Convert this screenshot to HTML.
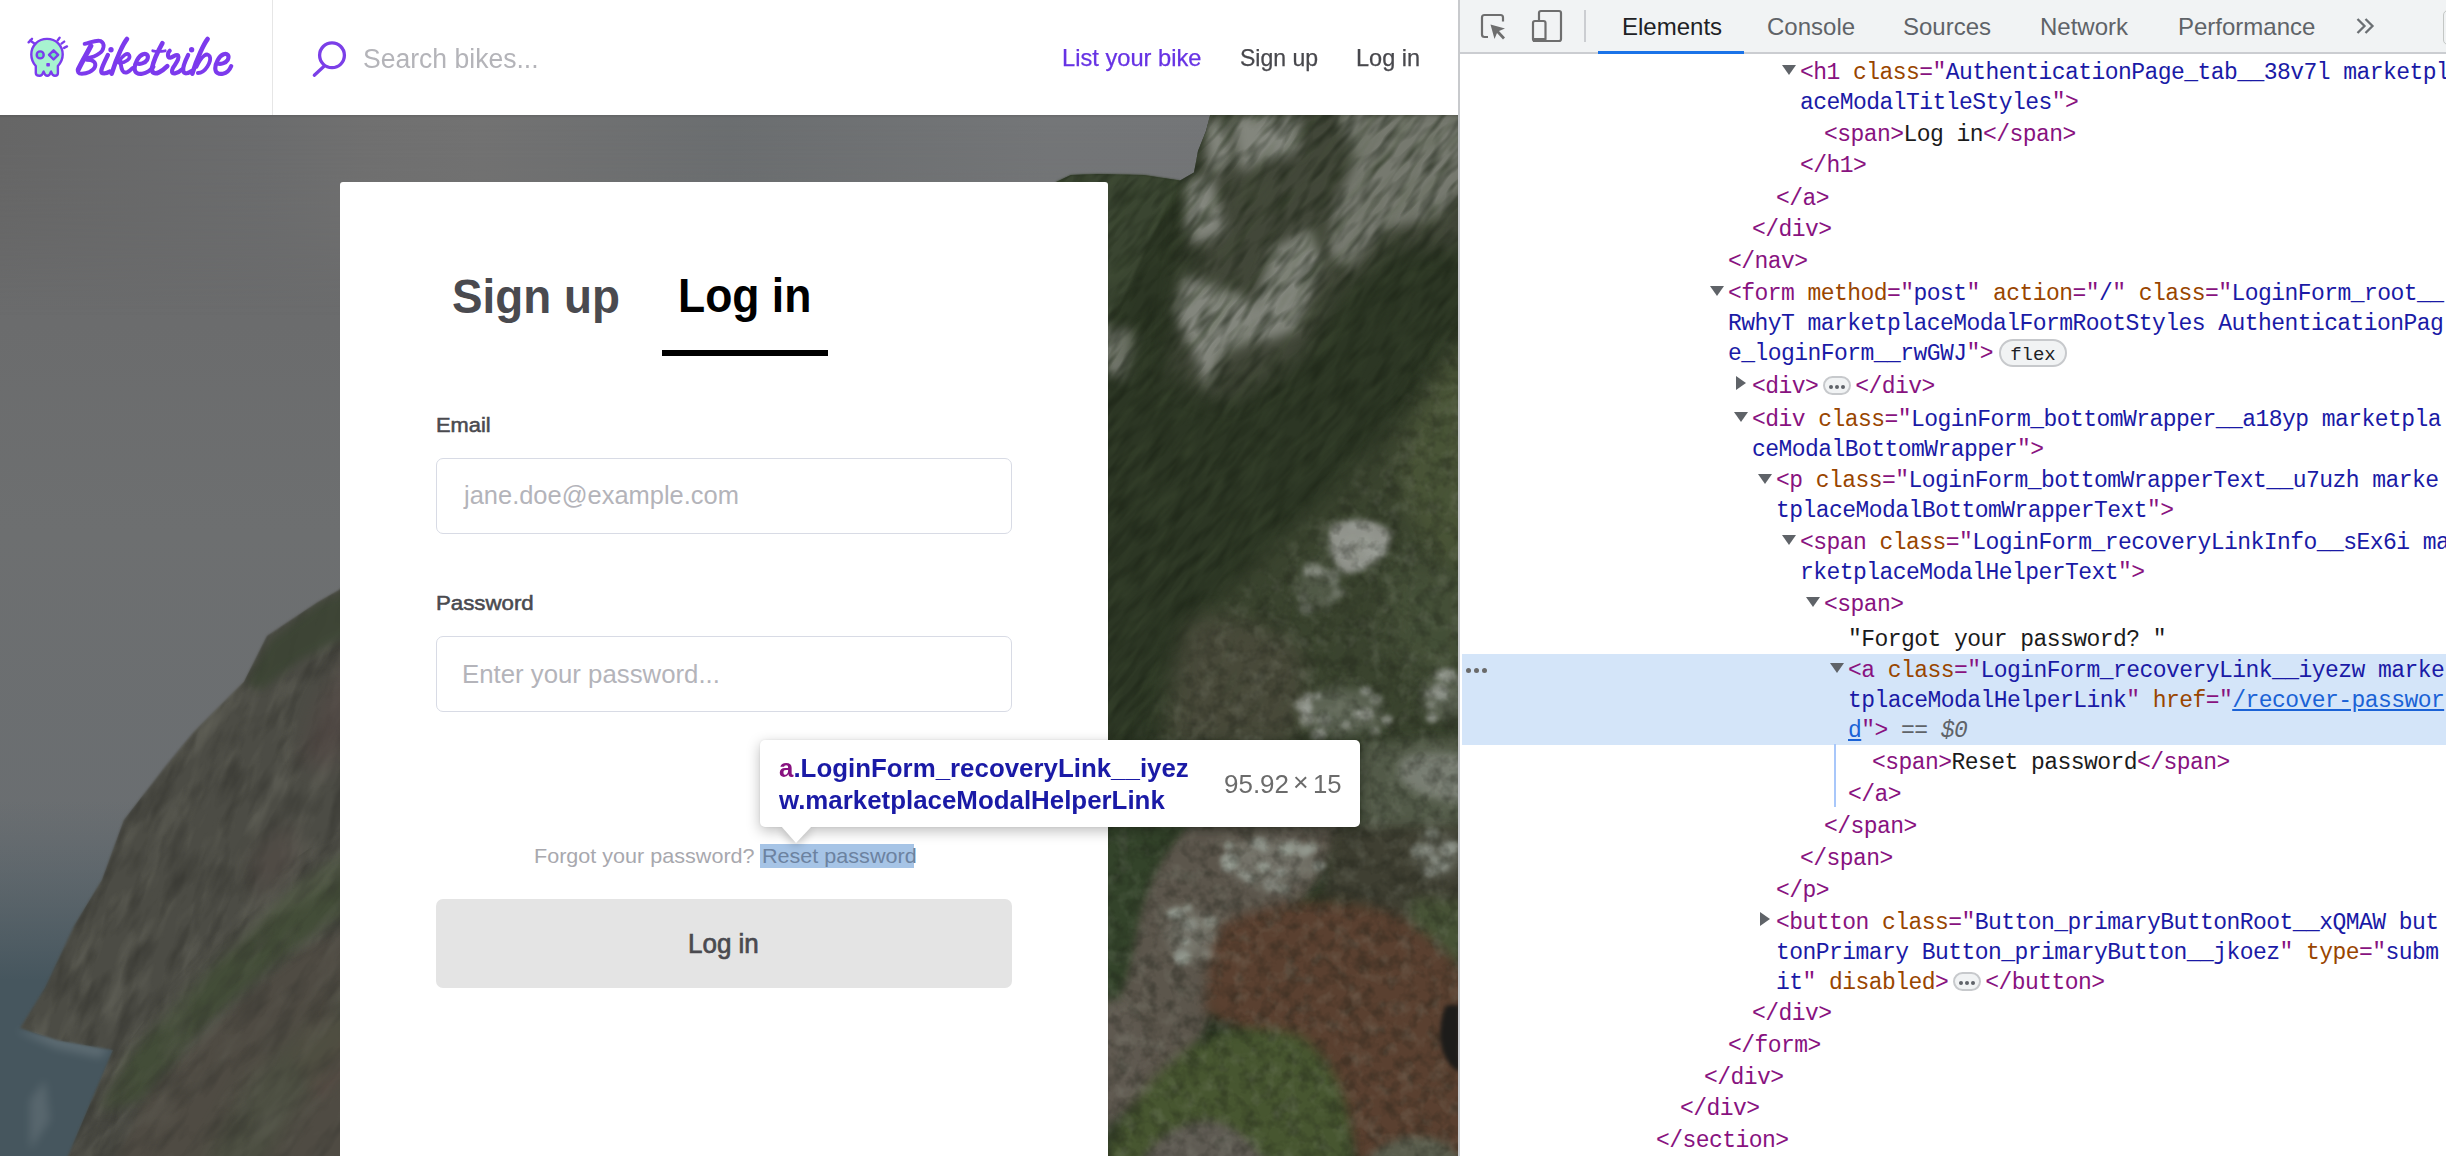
<!DOCTYPE html>
<html><head><meta charset="utf-8">
<style>
*{margin:0;padding:0;box-sizing:border-box}
html,body{width:2446px;height:1156px;overflow:hidden;background:#fff;font-family:"Liberation Sans",sans-serif}
.abs{position:absolute;white-space:pre;transform-origin:0 0}
#page{position:absolute;left:0;top:0;width:1458px;height:1156px;overflow:hidden;background:#fff}
#hdr{position:absolute;left:0;top:0;width:1458px;height:115px;background:#fff}
#sep{position:absolute;left:272px;top:0;width:1px;height:115px;background:#e6e6e6}
#photo{position:absolute;left:0;top:115px;width:1458px;height:1041px;overflow:hidden;background:#6b6d6e}
#modal{position:absolute;left:340px;top:182px;width:768px;height:1000px;background:#fff;border-radius:3px}
.nav{font-size:22px;line-height:25px}
#dt{position:absolute;left:1458px;top:0;width:988px;height:1156px;background:#fff;overflow:hidden}
#dtbar{position:absolute;left:0;top:0;width:988px;height:52px;background:#f1f3f4;border-left:2px solid #c8cacd}
#dtline{position:absolute;left:2px;top:52px;width:986px;height:2px;background:#cbcdd1}
#dtleft{position:absolute;left:0;top:0;width:2px;height:1156px;background:#c8cacd}
.tab{position:absolute;top:13px;font-size:24px;line-height:28px;color:#5f6368;transform:scaleX(1)}
.code{position:absolute;left:0;font-family:"Liberation Mono",monospace;font-size:23px;line-height:30px;letter-spacing:-0.555px;white-space:pre;color:#000}
.dot{position:absolute;top:0;width:5px;height:5px;border-radius:50%;background:#6a6a6a}
.t{color:#881280}.an{color:#994500}.av{color:#1a1aa6}.tx{color:#1b1b1b}
.tri{position:absolute;width:0;height:0}
.dn{border-left:7.5px solid transparent;border-right:7.5px solid transparent;border-top:10.6px solid #5f6368}
.badge{display:inline-block;vertical-align:middle;position:relative;top:-1px;width:28px;height:19px;margin:0 4px 0 5px;border:2px solid #c7c9cc;border-radius:10px;background:#f1f3f4;text-align:center;line-height:11px;letter-spacing:0}
.badge i{display:inline-block;width:4px;height:4px;border-radius:2px;background:#5f6368;margin:0 1px}
.flex{display:inline-block;vertical-align:middle;position:relative;top:-1px;margin-left:6px;width:68px;height:28px;border:2px solid #c7c9cc;border-radius:14px;background:#f1f3f4;font-size:19px;line-height:28px;text-align:center;color:#202124;letter-spacing:0}
.lnk{color:#1a62d6;text-decoration:underline}.eq{color:#5f6368}.d0{color:#5f6368;font-style:italic}
.rt{border-top:7.5px solid transparent;border-bottom:7.5px solid transparent;border-left:10.6px solid #5f6368}
</style></head><body>
<div id="page">
  <div id="hdr">
    <div id="sep"></div>
    <div style="position:absolute;left:0;top:115px;width:1458px;height:3px;background:linear-gradient(rgba(0,0,0,0.1),rgba(0,0,0,0));z-index:1"></div>
    <!-- logo -->
    <svg class="abs" style="left:0;top:0" width="272" height="115" viewBox="0 0 272 115">
      <g id="skull" stroke="#7b3ced" stroke-width="2.4" fill="#a7f3d0" stroke-linejoin="round" stroke-linecap="round">
        <path d="M35.8 73 L35.8 66 C32.6 62.5 31.3 58.5 31.3 54.5 C31.3 45.5 38 38.9 47 38.9 C56 38.9 62.7 45.5 62.7 54.5 C62.7 58.5 61 62.5 57.9 66 L57.9 73 C57.9 75 56.6 75.7 55 75.7 C53 75.7 51.8 74.2 51 71.6 C50.2 74.2 49 75.7 47.3 75.7 C45.6 75.7 44.4 74.2 43.6 71.6 C42.8 74.2 41.6 75.7 39.6 75.7 C37.2 75.7 35.8 75 35.8 73 Z"/>
        <circle cx="40.2" cy="54.9" r="3.5" fill="#6ee7b7"/>
        <path d="M53.6 50.3 L58.2 54.9 L53.6 59.5 L49 54.9 Z" fill="#6ee7b7"/>
        <rect x="46.3" y="63" width="3.6" height="3.5" rx="0.8" fill="#7b3ced" stroke="none"/>
        <path d="M35.2 44 L30 40.6 M28.6 42.3 L32 38.8 M57.6 40.4 L59.6 37.8 M61.5 43.6 L64.2 41.6 M64.1 47.9 L67 46.4" fill="none"/>
      </g>
      </svg>
    <svg class="abs" style="left:70px;top:32px" width="170" height="50" viewBox="0 0 2446 719"><g fill="none" stroke="#7c3aed" stroke-linecap="round" stroke-linejoin="round">
      <path d="M210 170 C300 150 380 110 440 130 C510 165 490 260 420 310 C370 350 300 370 250 375" stroke-width="55"/>
      <path d="M300 200 C250 300 160 450 120 540" stroke-width="73"/>
      <path d="M240 400 C330 400 380 430 360 500 C330 570 240 600 170 600 C120 600 100 570 120 530" stroke-width="57"/>
      <path d="M545 330 C500 420 450 520 450 560 C450 610 520 600 570 570" stroke-width="62"/>
      <circle cx="590" cy="255" r="38" fill="#7c3aed" stroke="none"/>
      <path d="M820 100 C780 150 680 330 600 600" stroke-width="66"/>
      <path d="M700 430 C760 330 830 290 850 330 C880 380 800 450 700 440" stroke-width="52"/>
      <path d="M730 460 C740 540 760 600 820 580 C850 570 880 540 900 520" stroke-width="57"/>
      <path d="M960 450 C1000 470 1080 450 1110 400 C1140 340 1100 300 1050 320 C980 350 930 450 930 520 C930 590 980 610 1040 600 C1100 590 1160 550 1200 500" stroke-width="60"/>
      <path d="M1330 160 C1280 250 1200 420 1180 520 C1170 590 1220 610 1280 580 C1320 560 1360 530 1400 490" stroke-width="66"/>
      <path d="M1190 270 C1250 285 1320 280 1370 270" stroke-width="40"/>
      <path d="M1435 270 C1400 300 1400 370 1440 370 C1490 360 1530 310 1555 340 C1580 380 1530 440 1480 520 C1460 560 1460 600 1510 595 C1550 590 1590 560 1610 540" stroke-width="60"/>
      <path d="M1700 330 C1650 430 1620 520 1630 560 C1640 610 1700 600 1750 560" stroke-width="60"/>
      <circle cx="1750" cy="255" r="38" fill="#7c3aed" stroke="none"/>
      <path d="M1980 100 C1940 150 1820 380 1760 600" stroke-width="66"/>
      <path d="M1820 500 C1900 330 1980 290 2010 350 C2040 420 1950 590 1840 590" stroke-width="55"/>
      <path d="M2120 450 C2160 470 2240 450 2270 400 C2300 340 2260 300 2210 320 C2140 350 2090 450 2090 520 C2090 590 2140 610 2200 600 C2260 590 2300 540 2320 490" stroke-width="60"/>
    </g></svg>
    <!-- search -->
    <svg class="abs" style="left:300px;top:30px" width="60" height="55" viewBox="300 30 60 55">
      <circle cx="332" cy="55.3" r="12.4" fill="none" stroke="#7b3fe8" stroke-width="3.3"/>
      <path d="M323.8 66.5 L314.3 75.2" stroke="#7b3fe8" stroke-width="3.3" stroke-linecap="round"/>
    </svg>
    <div class="abs" style="left:363px;top:45.8px;font-size:27px;line-height:27px;color:#b4b4b9;transform:scaleX(0.983)">Search bikes...</div>
    <div class="abs" style="left:1062px;top:46.5px;font-size:23.4px;line-height:23.4px;color:#6733e4;-webkit-text-stroke:0.25px #6733e4;transform:scaleX(1.012)">List your bike</div>
    <div class="abs" style="left:1239.9px;top:46.5px;font-size:23.4px;line-height:23.4px;color:#48484d;-webkit-text-stroke:0.25px #48484d;transform:scaleX(0.984)">Sign up</div>
    <div class="abs" style="left:1355.6px;top:46.5px;font-size:23.4px;line-height:23.4px;color:#48484d;-webkit-text-stroke:0.25px #48484d;transform:scaleX(1.006)">Log in</div>
  </div>
  <div id="photo">
    <svg width="1458" height="1041" viewBox="0 115 1458 1041" style="position:absolute;left:0;top:0" color-interpolation-filters="sRGB">
      <defs>
        <linearGradient id="sky" x1="0" y1="115" x2="0" y2="1156" gradientUnits="userSpaceOnUse">
          <stop offset="0" stop-color="#69696a"/>
          <stop offset="0.4" stop-color="#6d6f70"/>
          <stop offset="0.7" stop-color="#6a6e71"/>
          <stop offset="1" stop-color="#5e676c"/>
        </linearGradient>
        <linearGradient id="skyx" x1="0" y1="0" x2="1458" y2="0" gradientUnits="userSpaceOnUse">
          <stop offset="0" stop-color="#000" stop-opacity="0.04"/>
          <stop offset="0.5" stop-color="#fff" stop-opacity="0.02"/>
          <stop offset="1" stop-color="#000" stop-opacity="0"/>
        </linearGradient>
        <linearGradient id="sea" x1="0" y1="800" x2="0" y2="980" gradientUnits="userSpaceOnUse">
          <stop offset="0" stop-color="#55626a" stop-opacity="0"/>
          <stop offset="1" stop-color="#46565e" stop-opacity="1"/>
        </linearGradient>
        <filter id="b1" filterUnits="userSpaceOnUse" x="-100" y="0" width="1700" height="1300"><feGaussianBlur stdDeviation="1.2"/></filter>
        <filter id="b2" filterUnits="userSpaceOnUse" x="-100" y="0" width="1700" height="1300"><feGaussianBlur stdDeviation="2"/></filter>
        <filter id="b4" filterUnits="userSpaceOnUse" x="-100" y="0" width="1700" height="1300"><feGaussianBlur stdDeviation="4"/></filter>
        <filter id="b6" filterUnits="userSpaceOnUse" x="-100" y="0" width="1700" height="1300"><feGaussianBlur stdDeviation="6"/></filter>
        <filter id="b10" filterUnits="userSpaceOnUse" x="-100" y="0" width="1700" height="1300"><feGaussianBlur stdDeviation="10"/></filter>
        <filter id="fol" filterUnits="userSpaceOnUse" x="800" y="-100" width="1000" height="1200">
          <feTurbulence type="fractalNoise" baseFrequency="0.02 0.09" numOctaves="3" seed="5"/>
          <feColorMatrix type="matrix" values="0 0 0 0 0.30  0 0 0 0 0.36  0 0 0 0 0.24  2.6 0 0 0 -1.15"/>
        </filter>
        <filter id="fol2" filterUnits="userSpaceOnUse" x="800" y="-100" width="1000" height="1200">
          <feTurbulence type="fractalNoise" baseFrequency="0.03 0.12" numOctaves="2" seed="9"/>
          <feColorMatrix type="matrix" values="0 0 0 0 0.10  0 0 0 0 0.13  0 0 0 0 0.08  2.6 0 0 0 -1.1"/>
        </filter>
        <filter id="rock" filterUnits="userSpaceOnUse" x="-300" y="0" width="900" height="1500">
          <feTurbulence type="fractalNoise" baseFrequency="0.015 0.05" numOctaves="3" seed="2"/>
          <feColorMatrix type="matrix" values="0 0 0 0 0.42  0 0 0 0 0.42  0 0 0 0 0.38  2.4 0 0 0 -1.1"/>
        </filter>
        <clipPath id="rclip"><path d="M1214 100 L1470 100 L1470 1170 L1100 1170 L1100 182 L1056 182 L1071 175 L1098 174 L1144 175 L1180 180.6 L1194 172.5 L1198 151 L1206 131 Z"/></clipPath>
        <clipPath id="rclip2"><path d="M1470 300 L1420 360 L1380 440 L1300 520 L1200 620 L1150 720 L1100 760 L1100 1170 L1470 1170 Z"/></clipPath>
        <mask id="lowmask" maskUnits="userSpaceOnUse" x="1100" y="100" width="370" height="1070"><path d="M1470 320 L1420 380 L1380 450 L1300 530 L1200 630 L1150 730 L1100 770 L1100 1170 L1470 1170 Z" fill="#fff" filter="url(#b10)"/></mask>
        <clipPath id="lcliff2"><path d="M360 815 L300 855 L230 915 L170 985 L120 1055 L95 1110 L62 1170 L360 1170 Z"/></clipPath>
        <clipPath id="lcliff"><path d="M360 570 L339 590 L318 602 L267 636 L244 682 L193 733 L165 767 L124 820 L102 880 L74 926 L45 988 L20 1028 L57 1040 L113 1050 L62 1170 L360 1170 Z"/></clipPath>
        <linearGradient id="skyh" x1="0" y1="0" x2="1458" y2="0" gradientUnits="userSpaceOnUse">
          <stop offset="0" stop-color="#666666"/>
          <stop offset="0.18" stop-color="#6b6c6d"/>
          <stop offset="0.25" stop-color="#707070"/>
          <stop offset="0.33" stop-color="#727272"/>
          <stop offset="0.5" stop-color="#6b6e70"/>
          <stop offset="0.72" stop-color="#747678"/>
          <stop offset="1" stop-color="#737577"/>
        </linearGradient>
        <linearGradient id="skymg" x1="0" y1="115" x2="0" y2="315" gradientUnits="userSpaceOnUse">
          <stop offset="0" stop-color="#fff" stop-opacity="1"/>
          <stop offset="0.5" stop-color="#fff" stop-opacity="0.8"/>
          <stop offset="1" stop-color="#fff" stop-opacity="0"/>
        </linearGradient>
        <mask id="skym" maskUnits="userSpaceOnUse" x="0" y="115" width="1458" height="200"><rect x="0" y="115" width="1458" height="200" fill="url(#skymg)"/></mask>
        <filter id="bush" filterUnits="userSpaceOnUse" x="1100" y="300" width="370" height="870">
          <feTurbulence type="fractalNoise" baseFrequency="0.07" numOctaves="3" seed="21"/>
          <feColorMatrix type="matrix" values="0 0 0 0 0.10  0 0 0 0 0.11  0 0 0 0 0.08  2.8 0 0 0 -1.2"/>
        </filter>
        <filter id="bushl" filterUnits="userSpaceOnUse" x="1100" y="300" width="370" height="870">
          <feTurbulence type="fractalNoise" baseFrequency="0.06" numOctaves="3" seed="33"/>
          <feColorMatrix type="matrix" values="0 0 0 0 0.62  0 0 0 0 0.64  0 0 0 0 0.58  2.8 0 0 0 -1.35"/>
        </filter>
        <filter id="rockd" filterUnits="userSpaceOnUse" x="-300" y="0" width="900" height="1500">
          <feTurbulence type="fractalNoise" baseFrequency="0.02 0.06" numOctaves="3" seed="8"/>
          <feColorMatrix type="matrix" values="0 0 0 0 0.20  0 0 0 0 0.20  0 0 0 0 0.18  2.6 0 0 0 -1.2"/>
        </filter>
      </defs>
      <rect x="0" y="115" width="1458" height="1041" fill="url(#sky)"/>
      <rect x="0" y="115" width="1458" height="200" fill="url(#skyh)" mask="url(#skym)"/>
      <!-- LEFT: sea -->
      <rect x="-20" y="790" width="200" height="380" fill="url(#sea)"/>
      <path d="M15 1030 L60 1034 L110 1048 L100 1058 L55 1048 Z" fill="#78858b" filter="url(#b4)" opacity="0.45"/>
      <path d="M30 1100 L45 1080 L50 1120 L30 1150 Z" fill="#6a777d" filter="url(#b4)" opacity="0.5"/>
      <!-- LEFT: main cliff -->
      <path d="M360 570 L339 590 L318 602 L267 636 L244 682 L193 733 L165 767 L124 820 L102 880 L74 926 L45 988 L20 1028 L57 1040 L113 1050 L62 1170 L360 1170 Z" fill="#4c4c45" filter="url(#b1)"/>
      <g clip-path="url(#lcliff)">
        <g transform="rotate(-65 200 850)"><rect x="-100" y="500" width="600" height="700" filter="url(#rock)" opacity="0.55"/><rect x="-100" y="500" width="600" height="700" filter="url(#rockd)" opacity="0.6"/></g>
        <path d="M360 640 L320 700 L300 760 L330 770 L360 720 Z" fill="#574846" filter="url(#b10)" opacity="0.5"/>
        <path d="M250 860 L290 820 L300 860 L260 900 Z" fill="#564a46" filter="url(#b10)" opacity="0.45"/>
        <path d="M360 585 L318 604 L270 640 L246 684 L262 690 L300 660 L340 640 L360 630 Z" fill="#3b4433" filter="url(#b4)" opacity="0.85"/>
      </g>
      <!-- LEFT: green band & front cliff -->
      <path d="M360 920 L300 950 L230 1010 L150 1090 L110 1170 L360 1170 Z" fill="#4f4b43" filter="url(#b4)"/>
      <path d="M360 850 L310 880 L250 930 L190 990 L130 1055 L100 1110 L140 1100 L200 1030 L260 975 L320 930 L360 905 Z" fill="#434d38" filter="url(#b6)"/>
      <path d="M360 840 L300 880 L250 925 L300 905 L360 865 Z" fill="#5a614e" filter="url(#b4)" opacity="0.6"/>
      <path d="M330 1000 L290 1060 L320 1100 L360 1050 Z" fill="#5a4a44" filter="url(#b6)" opacity="0.7"/>
      <path d="M360 980 L250 1080 L200 1170 L260 1170 L300 1100 L360 1040 Z" fill="#4a5140" filter="url(#b10)" opacity="0.6"/>

      <g clip-path="url(#lcliff2)">
        <g transform="rotate(-50 200 1000)"><rect x="-200" y="700" width="700" height="700" filter="url(#rockd)" opacity="0.45"/><rect x="-200" y="700" width="700" height="700" filter="url(#rock)" opacity="0.3"/></g>
      </g>
      <!-- RIGHT: base green -->
      <path d="M1214 100 L1470 100 L1470 1170 L1100 1170 L1100 182 L1056 182 L1071 175 L1098 174 L1144 175 L1180 180.6 L1194 172.5 L1198 151 L1206 131 Z" fill="#2c3624"/>
      <path d="M1056 182 L1071 175 L1098 174 L1144 175 L1180 180.6 L1150 240 L1108 330 L1050 330 Z" fill="#3a4531" filter="url(#b1)"/>
      <g clip-path="url(#rclip)">
      <!-- rock zone top: medium tone -->
      <path d="M1207 110 L1470 110 L1470 250 L1400 245 L1340 290 L1300 360 L1230 400 L1170 380 L1185 250 L1193 175 Z" fill="#424739" filter="url(#b10)"/>
      <g fill="#83867d" filter="url(#b6)">
        <path d="M1232 115 L1300 115 L1298 152 L1261 162 L1241 172 L1234 140 Z"/>
        <path d="M1335 110 L1470 110 L1470 180 L1440 215 L1384 230 L1350 268 L1328 255 L1334 209 L1355 160 Z" opacity="0.8"/>
        <path d="M1186 182 L1212 176 L1225 232 L1195 245 L1186 220 Z"/>
        <path d="M1272 250 L1310 228 L1322 265 L1297 330 L1264 342 L1254 307 Z"/>
        <path d="M1185 275 L1216 286 L1252 300 L1262 338 L1224 352 L1208 390 L1175 312 Z"/>
        <path d="M1100 325 L1135 332 L1125 380 L1100 370 Z" opacity="0.8"/>
        <path d="M1205 125 L1225 118 L1232 162 L1210 178 Z"/>
      </g>
      </g>
      <!-- foliage texture -->
      <g clip-path="url(#rclip)">
        <g transform="rotate(-50 1280 600)">
          <rect x="800" y="-100" width="1000" height="1200" filter="url(#fol2)" opacity="0.55"/>
          <rect x="800" y="-100" width="1000" height="1200" filter="url(#fol)" opacity="0.22"/>
        </g>
      </g>
      <!-- right lighter vegetation band -->
      <path d="M1470 330 C1440 360 1420 400 1400 420 C1360 460 1330 500 1300 520 C1260 560 1220 590 1200 620 C1180 660 1160 700 1150 740 L1470 740 Z" fill="#3c4530" filter="url(#b10)" opacity="0.9"/>
      <path d="M1470 340 C1430 380 1405 430 1400 470 C1405 520 1430 560 1470 580 Z" fill="#4c5739" filter="url(#b10)" opacity="0.85"/>
      <path d="M1390 560 C1420 560 1450 570 1470 580 L1470 680 C1440 680 1400 670 1385 640 Z" fill="#47523a" filter="url(#b10)" opacity="0.8"/>
      <path d="M1190 620 C1230 610 1280 630 1300 650 C1310 690 1300 730 1290 745 L1170 745 C1170 700 1175 650 1190 620 Z" fill="#4d4c3e" filter="url(#b10)" opacity="0.75"/>
      <g fill="#999d95" filter="url(#b2)">
      <path d="M1332 525 C1352 516 1380 520 1390 532 C1394 548 1372 568 1348 574 C1332 570 1325 542 1332 525 Z" fill="#8e9089" filter="url(#b2)"/>
      <ellipse cx="1358" cy="546" rx="27" ry="19" opacity="0.41" filter="url(#b6)"/>
      <ellipse cx="1366" cy="525" rx="5.4" ry="4.3" opacity="0.62"/>
      <ellipse cx="1372" cy="554" rx="8.5" ry="6.8" opacity="0.57"/>
      <ellipse cx="1353" cy="525" rx="5.1" ry="4.1" opacity="0.72"/>
      <ellipse cx="1367" cy="548" rx="5.1" ry="4.1" opacity="0.75"/>
      <ellipse cx="1376" cy="555" rx="5.7" ry="4.6" opacity="0.60"/>
      <ellipse cx="1385" cy="539" rx="4.5" ry="3.6" opacity="0.57"/>
      <ellipse cx="1379" cy="551" rx="8.0" ry="6.4" opacity="0.80"/>
      <ellipse cx="1360" cy="567" rx="5.9" ry="4.7" opacity="0.74"/>
      <ellipse cx="1378" cy="551" rx="8.3" ry="6.6" opacity="0.75"/>
      <ellipse cx="1370" cy="526" rx="5.1" ry="4.1" opacity="0.64"/>
      <ellipse cx="1333" cy="534" rx="4.5" ry="3.6" opacity="0.64"/>
      <ellipse cx="1366" cy="540" rx="5.9" ry="4.7" opacity="0.62"/>
      <ellipse cx="1316" cy="585" rx="20" ry="24" opacity="0.25" filter="url(#b6)"/>
      <ellipse cx="1306" cy="609" rx="7.2" ry="5.8" opacity="0.46"/>
      <ellipse cx="1302" cy="598" rx="4.8" ry="3.9" opacity="0.41"/>
      <ellipse cx="1338" cy="593" rx="6.8" ry="5.4" opacity="0.48"/>
      <ellipse cx="1331" cy="600" rx="5.1" ry="4.1" opacity="0.34"/>
      <ellipse cx="1308" cy="572" rx="5.1" ry="4.0" opacity="0.54"/>
      <ellipse cx="1333" cy="575" rx="7.3" ry="5.8" opacity="0.42"/>
      <ellipse cx="1334" cy="583" rx="5.3" ry="4.3" opacity="0.38"/>
      <ellipse cx="1319" cy="572" rx="6.9" ry="5.5" opacity="0.53"/>
      <ellipse cx="1312" cy="569" rx="9.0" ry="7.2" opacity="0.44"/>
      <ellipse cx="1342" cy="712" rx="40" ry="24" opacity="0.38" filter="url(#b6)"/>
      <ellipse cx="1307" cy="719" rx="8.0" ry="6.4" opacity="0.65"/>
      <ellipse cx="1303" cy="705" rx="9.0" ry="7.2" opacity="0.69"/>
      <ellipse cx="1358" cy="714" rx="5.3" ry="4.3" opacity="0.73"/>
      <ellipse cx="1307" cy="708" rx="6.3" ry="5.0" opacity="0.83"/>
      <ellipse cx="1376" cy="699" rx="6.5" ry="5.2" opacity="0.57"/>
      <ellipse cx="1324" cy="720" rx="7.0" ry="5.6" opacity="0.56"/>
      <ellipse cx="1366" cy="714" rx="7.9" ry="6.3" opacity="0.69"/>
      <ellipse cx="1376" cy="731" rx="5.5" ry="4.4" opacity="0.53"/>
      <ellipse cx="1305" cy="711" rx="4.3" ry="3.5" opacity="0.77"/>
      <ellipse cx="1366" cy="691" rx="6.4" ry="5.1" opacity="0.70"/>
      <ellipse cx="1321" cy="733" rx="6.1" ry="4.9" opacity="0.58"/>
      <ellipse cx="1346" cy="725" rx="5.0" ry="4.0" opacity="0.62"/>
      <ellipse cx="1387" cy="720" rx="6.2" ry="5.0" opacity="0.69"/>
      <ellipse cx="1308" cy="697" rx="5.7" ry="4.6" opacity="0.71"/>
      <ellipse cx="1318" cy="696" rx="4.4" ry="3.5" opacity="0.72"/>
      <ellipse cx="1318" cy="735" rx="8.3" ry="6.6" opacity="0.53"/>
      <ellipse cx="1445" cy="697" rx="23" ry="21" opacity="0.36" filter="url(#b6)"/>
      <ellipse cx="1431" cy="705" rx="5.1" ry="4.1" opacity="0.52"/>
      <ellipse cx="1468" cy="701" rx="6.4" ry="5.1" opacity="0.73"/>
      <ellipse cx="1461" cy="682" rx="4.5" ry="3.6" opacity="0.62"/>
      <ellipse cx="1441" cy="695" rx="7.6" ry="6.1" opacity="0.70"/>
      <ellipse cx="1440" cy="689" rx="8.3" ry="6.6" opacity="0.56"/>
      <ellipse cx="1429" cy="694" rx="6.1" ry="4.9" opacity="0.57"/>
      <ellipse cx="1432" cy="718" rx="6.2" ry="5.0" opacity="0.76"/>
      <ellipse cx="1448" cy="675" rx="9.0" ry="7.2" opacity="0.75"/>
      <ellipse cx="1463" cy="680" rx="6.4" ry="5.1" opacity="0.55"/>
      <ellipse cx="1440" cy="675" rx="5.9" ry="4.7" opacity="0.80"/>
      </g>
      <path d="M1360 745 C1400 740 1440 738 1470 740 L1470 835 L1360 835 Z" fill="#5b6250" filter="url(#b6)" opacity="0.85"/>
      <g fill="#8a8e86" filter="url(#b4)" opacity="0.7">
        <path d="M1400 760 C1420 750 1450 752 1470 760 L1470 800 C1450 805 1415 795 1400 780 Z"/>
      </g>
      <!-- lower right -->
      <path d="M1100 826 L1189 826 C1170 850 1150 890 1140 930 C1133 960 1131 990 1125 1010 L1100 1030 Z" fill="#33432a" filter="url(#b2)"/>
      <path d="M1189 826 L1340 826 C1335 860 1310 900 1280 915 C1250 925 1225 940 1215 1000 C1200 1050 1170 1090 1140 1110 L1100 1110 L1100 1030 C1125 1000 1132 960 1138 925 C1148 880 1165 850 1189 826 Z" fill="#5c564c" filter="url(#b4)"/>
      <path d="M1100 1000 C1115 995 1135 1000 1145 1040 C1150 1080 1140 1110 1100 1130 Z" fill="#5f5950" filter="url(#b6)"/>
      <path d="M1330 826 L1470 826 L1470 990 C1440 960 1410 930 1380 915 C1360 905 1340 900 1320 898 C1330 870 1332 850 1330 826 Z" fill="#3f3f32" filter="url(#b6)"/>
      <path d="M1410 900 C1430 895 1460 900 1470 905 L1470 970 C1450 965 1420 950 1410 930 Z" fill="#4a5838" filter="url(#b6)" opacity="0.8"/>
      <g fill="#969c93" filter="url(#b2)">
      <ellipse cx="1272" cy="862" rx="45" ry="24" opacity="0.38" filter="url(#b6)"/>
      <ellipse cx="1249" cy="878" rx="6.3" ry="5.0" opacity="0.65"/>
      <ellipse cx="1278" cy="874" rx="4.8" ry="3.8" opacity="0.61"/>
      <ellipse cx="1319" cy="866" rx="6.7" ry="5.4" opacity="0.76"/>
      <ellipse cx="1228" cy="867" rx="6.5" ry="5.2" opacity="0.80"/>
      <ellipse cx="1282" cy="872" rx="5.2" ry="4.1" opacity="0.55"/>
      <ellipse cx="1311" cy="848" rx="7.0" ry="5.6" opacity="0.72"/>
      <ellipse cx="1264" cy="867" rx="6.6" ry="5.3" opacity="0.83"/>
      <ellipse cx="1242" cy="874" rx="5.2" ry="4.2" opacity="0.64"/>
      <ellipse cx="1289" cy="851" rx="5.6" ry="4.5" opacity="0.77"/>
      <ellipse cx="1229" cy="860" rx="9.0" ry="7.2" opacity="0.85"/>
      <ellipse cx="1229" cy="846" rx="5.3" ry="4.3" opacity="0.83"/>
      <ellipse cx="1259" cy="843" rx="8.2" ry="6.5" opacity="0.75"/>
      <ellipse cx="1283" cy="889" rx="7.3" ry="5.8" opacity="0.51"/>
      <ellipse cx="1304" cy="851" rx="7.3" ry="5.9" opacity="0.83"/>
      <ellipse cx="1233" cy="865" rx="5.4" ry="4.3" opacity="0.72"/>
      <ellipse cx="1294" cy="845" rx="7.2" ry="5.7" opacity="0.60"/>
      <ellipse cx="1271" cy="885" rx="8.2" ry="6.6" opacity="0.54"/>
      <ellipse cx="1264" cy="849" rx="4.0" ry="3.2" opacity="0.77"/>
      <ellipse cx="1286" cy="849" rx="7.7" ry="6.2" opacity="0.70"/>
      <ellipse cx="1192" cy="935" rx="27" ry="24" opacity="0.36" filter="url(#b6)"/>
      <ellipse cx="1188" cy="908" rx="4.4" ry="3.5" opacity="0.76"/>
      <ellipse cx="1216" cy="938" rx="8.2" ry="6.5" opacity="0.67"/>
      <ellipse cx="1171" cy="914" rx="5.5" ry="4.4" opacity="0.77"/>
      <ellipse cx="1210" cy="955" rx="8.5" ry="6.8" opacity="0.55"/>
      <ellipse cx="1177" cy="913" rx="7.9" ry="6.3" opacity="0.76"/>
      <ellipse cx="1186" cy="942" rx="4.8" ry="3.8" opacity="0.78"/>
      <ellipse cx="1211" cy="956" rx="4.1" ry="3.3" opacity="0.72"/>
      <ellipse cx="1182" cy="959" rx="8.0" ry="6.4" opacity="0.76"/>
      <ellipse cx="1211" cy="922" rx="7.9" ry="6.3" opacity="0.51"/>
      <ellipse cx="1214" cy="955" rx="5.1" ry="4.1" opacity="0.74"/>
      <ellipse cx="1190" cy="924" rx="8.0" ry="6.4" opacity="0.55"/>
      <ellipse cx="1182" cy="955" rx="8.8" ry="7.1" opacity="0.57"/>
      <ellipse cx="1440" cy="855" rx="25" ry="21" opacity="0.34" filter="url(#b6)"/>
      <ellipse cx="1448" cy="850" rx="8.9" ry="7.1" opacity="0.61"/>
      <ellipse cx="1466" cy="843" rx="4.5" ry="3.6" opacity="0.58"/>
      <ellipse cx="1453" cy="846" rx="7.0" ry="5.6" opacity="0.60"/>
      <ellipse cx="1434" cy="859" rx="5.3" ry="4.2" opacity="0.66"/>
      <ellipse cx="1442" cy="866" rx="7.7" ry="6.2" opacity="0.65"/>
      <ellipse cx="1432" cy="833" rx="7.3" ry="5.9" opacity="0.55"/>
      <ellipse cx="1430" cy="872" rx="7.6" ry="6.1" opacity="0.54"/>
      <ellipse cx="1429" cy="850" rx="6.0" ry="4.8" opacity="0.54"/>
      <ellipse cx="1419" cy="851" rx="8.7" ry="7.0" opacity="0.65"/>
      </g>
      <path d="M1222 925 C1265 902 1330 893 1390 912 C1430 932 1460 965 1470 985 L1470 1170 L1361 1170 C1345 1120 1325 1075 1300 1055 C1260 1035 1225 1025 1205 1010 C1208 965 1212 938 1222 925 Z" fill="#5a4030" filter="url(#b6)"/>
      <path d="M1175 1060 C1205 1030 1260 1022 1300 1035 C1340 1065 1355 1110 1350 1170 L1108 1170 L1108 1150 C1125 1110 1150 1080 1175 1060 Z" fill="#475630" filter="url(#b6)"/>
      <path d="M1137 1170 C1150 1140 1175 1122 1210 1120 C1240 1125 1260 1150 1268 1170 Z" fill="#5f5b53" filter="url(#b4)"/>
      <path d="M1360 1170 C1375 1140 1410 1130 1440 1140 C1455 1150 1465 1160 1470 1170 Z" fill="#5a5d4d" filter="url(#b4)"/>
      <g mask="url(#lowmask)">
        <rect x="1100" y="300" width="370" height="870" filter="url(#bush)" opacity="0.32"/>
        <rect x="1100" y="300" width="370" height="870" filter="url(#bushl)" opacity="0.18"/>
      </g>
      <path d="M1446 1005 C1436 1030 1438 1062 1460 1072 L1460 1005 Z" fill="#1d1c1a" filter="url(#b2)"/>
    </svg>
  </div>
  <div id="modal">
    <div class="abs" style="left:112.3px;top:89.9px;font-size:49px;line-height:49px;font-weight:bold;color:#4a4a4f;transform:scaleX(0.9345)">Sign up</div>
    <div class="abs" style="left:337.8px;top:90.4px;font-size:48px;line-height:48px;font-weight:bold;color:#000;transform:scaleX(0.9266)">Log in</div>
    <div class="abs" style="left:322px;top:168px;width:166px;height:6px;background:#000"></div>
    <div class="abs" style="left:96.4px;top:232.4px;font-size:21px;line-height:21px;font-weight:normal;-webkit-text-stroke:0.55px #4a4a4f;color:#4a4a4f;transform:scaleX(1.04)">Email</div>
    <div class="abs" style="left:96px;top:276px;width:576px;height:76px;border:1.5px solid #d8dbe5;border-radius:7px"></div>
    <div class="abs" style="left:124.0px;top:301.4px;font-size:25.5px;line-height:25.5px;color:#b4b4ba;transform:scaleX(0.9985)">jane.doe@example.com</div>
    <div class="abs" style="left:96.4px;top:410.1px;font-size:21px;line-height:21px;font-weight:normal;-webkit-text-stroke:0.55px #4a4a4f;color:#4a4a4f;transform:scaleX(1.06)">Password</div>
    <div class="abs" style="left:96px;top:454px;width:576px;height:76px;border:1.5px solid #d8dbe5;border-radius:7px"></div>
    <div class="abs" style="left:121.8px;top:479.5px;font-size:25.5px;line-height:25.5px;color:#b4b4ba;transform:scaleX(1.0108)">Enter your password...</div>
    <div class="abs" style="left:193.6px;top:664.3px;font-size:20.3px;line-height:20.3px;color:#a8a8ae;transform:scaleX(1.0636)">Forgot your password?</div>
    <div class="abs" style="left:420px;top:662px;width:154px;height:24px;background:#a6c4e6"></div>
    <div class="abs" style="left:422.0px;top:664.3px;font-size:20.3px;line-height:20.3px;color:#6c82a0;transform:scaleX(1.0636)">Reset password</div>
    <div class="abs" style="left:96px;top:717px;width:576px;height:89px;background:#e4e4e4;border-radius:7px"></div>
    <div class="abs" style="left:347.9px;top:748.9px;font-size:26.8px;line-height:26.8px;font-weight:normal;-webkit-text-stroke:0.7px #4a4a4f;color:#4a4a4f;transform:scaleX(0.97)">Log in</div>
  </div>
  <div id="tip" style="position:absolute;left:760px;top:740px;width:600px;height:87px;background:#fff;border-radius:5px;box-shadow:0 4px 14px rgba(0,0,0,0.26),0 0 3px rgba(0,0,0,0.08)"></div>
<svg class="abs" style="left:770px;top:820px;filter:drop-shadow(0 3px 5px rgba(0,0,0,0.25))" width="60" height="30" viewBox="770 820 60 30"><path d="M781 826 L796 843 L812 826 Z" fill="#fff"/></svg>
<div style="position:absolute;left:765px;top:810px;width:80px;height:17px;background:#fff"></div>
<div class="abs" style="left:778.6px;top:755px;font-size:26px;line-height:26px;font-weight:bold;color:#1a1aa6;transform:scaleX(0.995)"><span style="color:#881280">a</span>.LoginForm_recoveryLink__iyez</div>
<div class="abs" style="left:778.6px;top:787px;font-size:26px;line-height:26px;font-weight:bold;color:#1a1aa6;transform:scaleX(0.995)">w.marketplaceModalHelperLink</div>
<div class="abs" style="left:1224px;top:770.6px;font-size:26.3px;line-height:26.3px;color:#6b6b6b;transform:scaleX(0.9875)">95.92</div>
<div class="abs" style="left:1293px;top:769px;font-size:26.3px;line-height:26.3px;color:#6b6b6b;transform:scaleX(1.0167)">×</div>
<div class="abs" style="left:1312.9px;top:770.6px;font-size:26.3px;line-height:26.3px;color:#6b6b6b;transform:scaleX(0.9778)">15</div>
</div>
<div id="dt">
  <div id="dtbar"></div>
  <div id="dtline"></div>
  <div style="position:absolute;left:140px;top:51px;width:146px;height:3px;background:#1a73e8"></div>
  <div id="dtleft"></div>
  <svg class="abs" style="left:0;top:0" width="140" height="52" viewBox="1458 0 140 52">
    <path d="M1488 37 L1484.5 37 Q1482 37 1482 34.5 L1482 17.5 Q1482 15 1484.5 15 L1500.5 15 Q1503 15 1503 17.5 L1503 21.5" fill="none" stroke="#6e6e6e" stroke-width="2.2"/>
    <path d="M1490.5 24.5 L1505 28.5 L1499 31 L1505 37.5 L1503 39.5 L1497 33 L1494.5 39 Z" fill="#6e6e6e"/>
    <rect x="1539" y="11" width="22" height="30" rx="2" fill="none" stroke="#6e6e6e" stroke-width="2.2"/>
    <rect x="1533" y="21" width="12.5" height="20" rx="2" fill="#f1f3f4" stroke="#6e6e6e" stroke-width="2.2"/>
    <rect x="1533" y="38" width="12.5" height="4" fill="#6e6e6e"/>
    <rect x="1584" y="10" width="2" height="32" fill="#cbcdd1"/>
  </svg>
  <div class="tab" style="left:164px;color:#202124">Elements</div>
  <div class="tab" style="left:309px">Console</div>
  <div class="tab" style="left:445px">Sources</div>
  <div class="tab" style="left:582px">Network</div>
  <div class="tab" style="left:720px">Performance</div>
  <svg class="abs" style="left:898px;top:15px" width="24" height="24" viewBox="0 0 24 24"><path d="M1.5 4 L8.5 11 L1.5 18 M9.5 4 L16.5 11 L9.5 18" fill="none" stroke="#6b6f73" stroke-width="2.3"/></svg>
  <div style="position:absolute;left:985px;top:10px;width:20px;height:35px;border:1.5px solid #c4c7c5;border-radius:5px"></div>
  <!--DT-->
<div class="tri dn" style="left:323.8px;top:65.0px"></div>
<div class="code" style="left:342px;top:57.9px"><span class="t">&lt;h1</span><span class="tx"> </span><span class="an">class</span><span class="t">=&quot;</span><span class="av">AuthenticationPage_tab__38v7l marketpl</span></div>
<div class="code" style="left:342px;top:87.9px"><span class="av">aceModalTitleStyles</span><span class="t">&quot;&gt;</span></div>
<div class="code" style="left:366px;top:119.8px"><span class="t">&lt;span&gt;</span><span class="tx">Log in</span><span class="t">&lt;/span&gt;</span></div>
<div class="code" style="left:342px;top:151.4px"><span class="t">&lt;/h1&gt;</span></div>
<div class="code" style="left:318px;top:183.5px"><span class="t">&lt;/a&gt;</span></div>
<div class="code" style="left:294px;top:215.4px"><span class="t">&lt;/div&gt;</span></div>
<div class="code" style="left:270px;top:247.4px"><span class="t">&lt;/nav&gt;</span></div>
<div class="tri dn" style="left:251.8px;top:286.1px"></div>
<div class="code" style="left:270px;top:279.0px"><span class="t">&lt;form</span><span class="tx"> </span><span class="an">method</span><span class="t">=&quot;</span><span class="av">post</span><span class="t">&quot;</span><span class="tx"> </span><span class="an">action</span><span class="t">=&quot;</span><span class="av">/</span><span class="t">&quot;</span><span class="tx"> </span><span class="an">class</span><span class="t">=&quot;</span><span class="av">LoginForm_root__</span></div>
<div class="code" style="left:270px;top:309.0px"><span class="av">RwhyT marketplaceModalFormRootStyles AuthenticationPag</span></div>
<div class="code" style="left:270px;top:339.0px"><span class="av">e_loginForm__rwGWJ</span><span class="t">&quot;&gt;</span><span class="flex">flex</span></div>
<div class="tri rt" style="left:277.6px;top:375.5px"></div>
<div class="code" style="left:294px;top:371.5px"><span class="t">&lt;div&gt;</span><span class="badge"><i></i><i></i><i></i></span><span class="t">&lt;/div&gt;</span></div>
<div class="tri dn" style="left:275.8px;top:412.1px"></div>
<div class="code" style="left:294px;top:405.0px"><span class="t">&lt;div</span><span class="tx"> </span><span class="an">class</span><span class="t">=&quot;</span><span class="av">LoginForm_bottomWrapper__a18yp marketpla</span></div>
<div class="code" style="left:294px;top:435.0px"><span class="av">ceModalBottomWrapper</span><span class="t">&quot;&gt;</span></div>
<div class="tri dn" style="left:299.8px;top:473.5px"></div>
<div class="code" style="left:318px;top:466.4px"><span class="t">&lt;p</span><span class="tx"> </span><span class="an">class</span><span class="t">=&quot;</span><span class="av">LoginForm_bottomWrapperText__u7uzh marke</span></div>
<div class="code" style="left:318px;top:496.4px"><span class="av">tplaceModalBottomWrapperText</span><span class="t">&quot;&gt;</span></div>
<div class="tri dn" style="left:323.8px;top:535.3px"></div>
<div class="code" style="left:342px;top:528.2px"><span class="t">&lt;span</span><span class="tx"> </span><span class="an">class</span><span class="t">=&quot;</span><span class="av">LoginForm_recoveryLinkInfo__sEx6i ma</span></div>
<div class="code" style="left:342px;top:558.2px"><span class="av">rketplaceModalHelperText</span><span class="t">&quot;&gt;</span></div>
<div class="tri dn" style="left:347.8px;top:597.4px"></div>
<div class="code" style="left:366px;top:590.3px"><span class="t">&lt;span&gt;</span></div>
<div class="code" style="left:390px;top:624.7px"><span class="tx">&quot;Forgot your password? &quot;</span></div>
<div style="position:absolute;left:4px;top:654.3px;width:984px;height:91px;background:#d4e5f9"></div>
<div style="position:absolute;left:8px;top:668.3px;width:22px;height:5px"><i class="dot" style="left:0"></i><i class="dot" style="left:8px"></i><i class="dot" style="left:16px"></i></div>
<div style="position:absolute;left:376px;top:744.3px;width:1.5px;height:63.0px;background:#a8c7fa"></div>
<div class="tri dn" style="left:371.8px;top:663.1px"></div>
<div class="code" style="left:390px;top:656.0px"><span class="t">&lt;a</span><span class="tx"> </span><span class="an">class</span><span class="t">=&quot;</span><span class="av">LoginForm_recoveryLink__iyezw marke</span></div>
<div class="code" style="left:390px;top:686.0px"><span class="av">tplaceModalHelperLink</span><span class="t">&quot;</span><span class="tx"> </span><span class="an">href</span><span class="t">=&quot;</span><span class="lnk">/recover-passwor</span></div>
<div class="code" style="left:390px;top:716.0px"><span class="lnk">d</span><span class="t">&quot;&gt;</span><span class="tx"> </span><span class="eq">== </span><span class="d0">$0</span></div>
<div class="code" style="left:414px;top:747.5px"><span class="t">&lt;span&gt;</span><span class="tx">Reset password</span><span class="t">&lt;/span&gt;</span></div>
<div class="code" style="left:390px;top:779.9px"><span class="t">&lt;/a&gt;</span></div>
<div class="code" style="left:366px;top:811.8px"><span class="t">&lt;/span&gt;</span></div>
<div class="code" style="left:342px;top:843.8px"><span class="t">&lt;/span&gt;</span></div>
<div class="code" style="left:318px;top:875.5px"><span class="t">&lt;/p&gt;</span></div>
<div class="tri rt" style="left:301.6px;top:911.5px"></div>
<div class="code" style="left:318px;top:907.5px"><span class="t">&lt;button</span><span class="tx"> </span><span class="an">class</span><span class="t">=&quot;</span><span class="av">Button_primaryButtonRoot__xQMAW but</span></div>
<div class="code" style="left:318px;top:937.5px"><span class="av">tonPrimary Button_primaryButton__jkoez</span><span class="t">&quot;</span><span class="tx"> </span><span class="an">type</span><span class="t">=&quot;</span><span class="av">subm</span></div>
<div class="code" style="left:318px;top:967.5px"><span class="av">it</span><span class="t">&quot;</span><span class="tx"> </span><span class="an">disabled</span><span class="t">&gt;</span><span class="badge"><i></i><i></i><i></i></span><span class="t">&lt;/button&gt;</span></div>
<div class="code" style="left:294px;top:998.6px"><span class="t">&lt;/div&gt;</span></div>
<div class="code" style="left:270px;top:1030.9px"><span class="t">&lt;/form&gt;</span></div>
<div class="code" style="left:246px;top:1062.5px"><span class="t">&lt;/div&gt;</span></div>
<div class="code" style="left:222px;top:1094.4px"><span class="t">&lt;/div&gt;</span></div>
<div class="code" style="left:198px;top:1126.4px"><span class="t">&lt;/section&gt;</span></div>
<!--/DT-->
</div>
</body></html>
